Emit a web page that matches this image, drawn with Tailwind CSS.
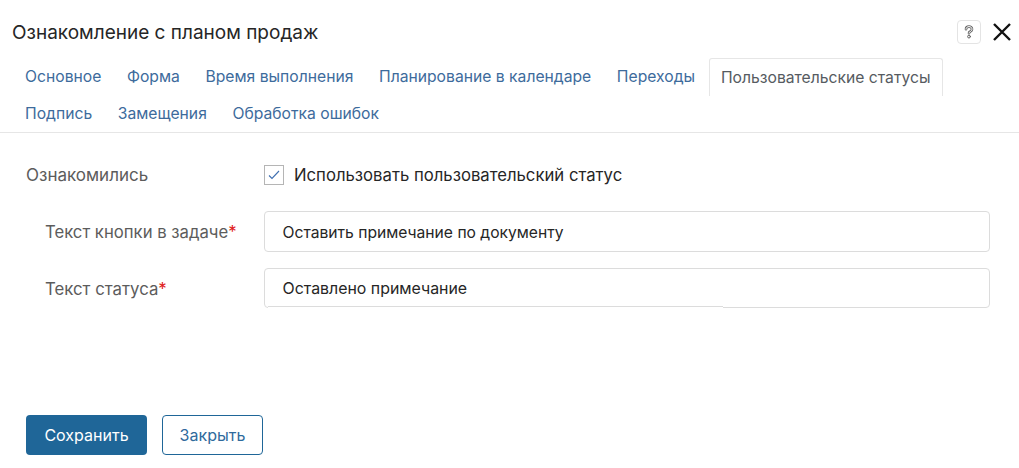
<!DOCTYPE html>
<html lang="ru">
<head>
  <meta charset="UTF-8" />
  <title>Ознакомление с планом продаж</title>
  <script src="https://cdn.jsdelivr.net/npm/@tailwindcss/browser@4"></script>
</head>
<body class="bg-white font-['Inter',sans-serif] h-[468px] w-[1019px] overflow-hidden">

  <!-- Header -->
  <div class="flex items-center justify-between h-[58px] pl-3 pr-[7px] pt-[6px]">
    <h1 class="text-[19px] text-[#262626] leading-6 pt-[2px]">Ознакомление с планом продаж</h1>
    <div class="flex items-center gap-[11px]">
      <button class="w-[24px] h-[24px] border border-[#e4e4e4] rounded-[4px] flex items-center justify-center">
        <svg width="10" height="14" viewBox="0 0 10 14" fill="none" stroke-linecap="round">
          <path d="M2 4.2C2 2.6 3.3 1.6 5 1.6s3 1 3 2.6c0 1.4-1 1.9-2 2.5-.7.4-1 .9-1 1.5" stroke="#666" stroke-width="2.6" />
          <path d="M2 4.2C2 2.6 3.3 1.6 5 1.6s3 1 3 2.6c0 1.4-1 1.9-2 2.5-.7.4-1 .9-1 1.5" stroke="#fff" stroke-width="1" />
          <circle cx="5" cy="11.6" r="1.4" stroke="#666" stroke-width="1" />
        </svg>
      </button>
      <svg width="20" height="20" viewBox="0 0 20 20" fill="none" stroke="#111" stroke-width="2.4"><path d="M2 2l16 16M18 2L2 18" /></svg>
    </div>
  </div>

  <!-- Tabs -->
  <div class="border-b border-[#e6e6e6] h-[75px] pl-3 text-[15.7px] text-[#3d6b9c]">
    <div class="flex h-[38px]">
      <a class="pl-[13px] pr-[12.8px] leading-[38px]">Основное</a>
      <a class="px-[12.8px] leading-[38px]">Форма</a>
      <a class="px-[12.8px] leading-[38px]">Время выполнения</a>
      <a class="px-[12.8px] leading-[38px]">Планирование в календаре</a>
      <a class="px-[12.8px] leading-[38px]">Переходы</a>
      <a class="ml-px px-[11px] leading-[37px] border border-b-0 border-[#e6e6e6] rounded-t-[3px] text-[#565b61]">Пользовательские статусы</a>
    </div>
    <div class="flex h-[36px]">
      <a class="pl-[13px] pr-[12.8px] leading-[36px]">Подпись</a>
      <a class="px-[12.8px] leading-[36px]">Замещения</a>
      <a class="px-[12.8px] leading-[36px]">Обработка ошибок</a>
    </div>
  </div>

  <!-- Form -->
  <div class="pl-[26px] pr-[29px]">
    <div class="flex items-center h-[20px] mt-[32px] text-[16.7px]">
      <div class="w-[238px] text-[#5c5c5c] text-[17px] pt-[2px]">Ознакомились</div>
      <span class="w-5 h-5 border border-[#b5b5b5] flex items-center justify-center">
        <svg width="12" height="10" viewBox="0 0 12 10" fill="none" stroke="#3f6fb0" stroke-width="1.1"><path d="M1 5.5l3 3 7-7.5" /></svg>
      </span>
      <span class="ml-[10px] text-[#262626] pt-[2px]">Использовать пользовательский статус</span>
    </div>

    <div class="flex items-center mt-[26px] text-[16.7px]">
      <div class="w-[238px] pl-[19px] pt-[2px] text-[#5c5c5c]">Текст кнопки в задаче<span class="text-[#e02020]">*</span></div>
      <div class="flex-1 h-[41px] border border-[#dcdcdc] rounded-[4px] pl-[17.5px] text-[15.65px] text-[#262626] leading-[41px]">Оставить примечание по документу</div>
    </div>

    <div class="flex items-center mt-[16px] text-[16.8px]">
      <div class="w-[238px] pl-[19px] pt-[4px] text-[#5c5c5c]">Текст статуса<span class="text-[#e02020]">*</span></div>
      <div class="relative flex-1 h-[40px] border border-[#dcdcdc] rounded-[4px] pl-[17.5px] text-[15.9px] text-[#262626] leading-[40px]">
        Оставлено примечание
        <div class="absolute left-[3px] bottom-[-1px] w-[455px] h-[2px] bg-white border-t border-[#dcdcdc]"></div>
      </div>
    </div>

    <!-- Buttons -->
    <div class="flex gap-[15px] mt-[107px] text-[16px]">
      <button class="w-[121px] h-[40px] bg-[#1f6698] text-white rounded-[4px]">Сохранить</button>
      <button class="w-[101px] h-[40px] border border-[#1f6698] text-[#2f6a9c] rounded-[4px]">Закрыть</button>
    </div>
  </div>
</body>
</html>
